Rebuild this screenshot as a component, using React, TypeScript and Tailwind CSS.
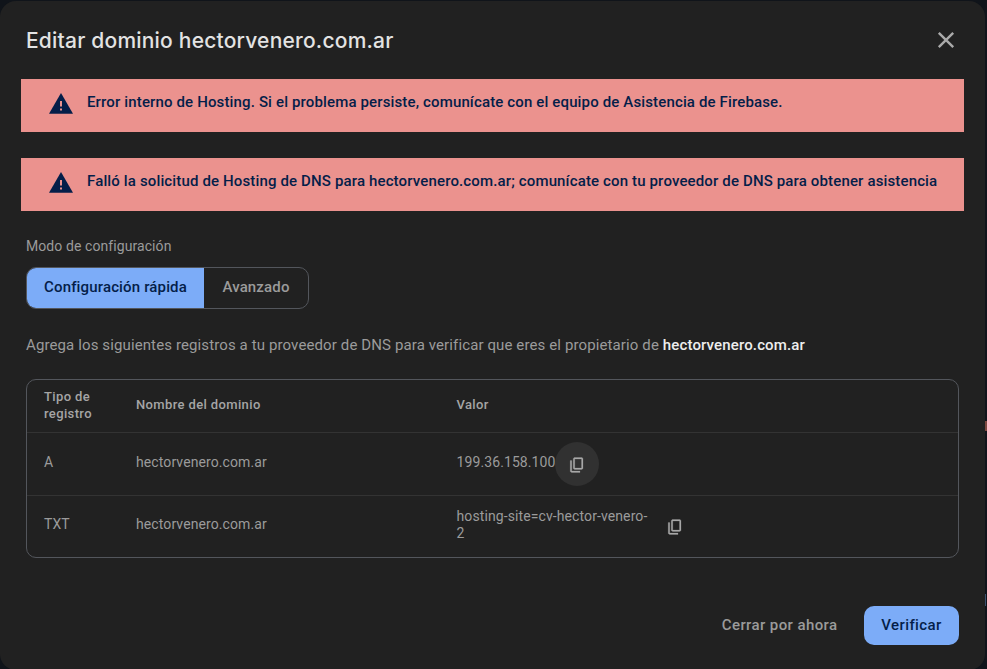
import React from "react";

function WarningIcon() {
  return (
    <svg className="h-6 w-6 shrink-0" viewBox="0 0 24 24" fill="#041e49">
      <path d="M0 21.7 12 1 24 21.7H0Z" />
      <path fill="#eb928e" d="M11 9h2v5.5h-2zM11 16.5h2v2h-2z" />
    </svg>
  );
}

function CopyIcon() {
  return (
    <svg className="h-[18px] w-[18px]" viewBox="0 0 24 24" fill="#a8a8a8">
      <path d="M9 18c-.55 0-1.02-.2-1.41-.59A1.93 1.93 0 0 1 7 16V4c0-.55.2-1.02.59-1.41C7.98 2.2 8.45 2 9 2h9c.55 0 1.02.2 1.41.59.4.39.59.86.59 1.41v12c0 .55-.2 1.02-.59 1.41-.39.4-.86.59-1.41.59H9Zm0-2h9V4H9v12Zm-4 6c-.55 0-1.02-.2-1.41-.59A1.93 1.93 0 0 1 3 20V6h2v14h11v2H5Z" stroke="#a8a8a8" strokeWidth="0.3" />
    </svg>
  );
}

function Alert({ children }: { children: React.ReactNode }) {
  return (
    <div role="alert" className="flex h-[53px] w-[943px] items-start bg-[#eb928e] pl-7 text-[#041e49]">
      <div className="pt-[13px]">
        <WarningIcon />
      </div>
      <p className="ml-3.5 pt-[13px] text-[15px] leading-5 font-medium tracking-[0.143px] whitespace-nowrap">{children}</p>
    </div>
  );
}

const columns = "grid grid-cols-[92px_320.5px_1fr] pl-[17px]";

export default function App() {
  return (
    <div className="h-[669px] w-[987px] overflow-hidden bg-[#10141a] font-['Roboto',sans-serif] text-[#9b9b9b]">
      <div className="flex pt-px">
        <main className="flex h-[669px] w-[985px] flex-col rounded-2xl bg-[#212121]">
          <header className="flex h-[78px] shrink-0 items-center justify-between pr-[27px] pl-[26px]">
            <h1 className="pt-[2px] font-['Inter',sans-serif] text-[21px] leading-7 font-medium tracking-[0.21px] text-[#e3e3e3]">
              Editar dominio hectorvenero.com.ar
            </h1>
            <button aria-label="Cerrar" className="flex">
              <svg className="h-6 w-6" viewBox="0 0 24 24" fill="none" stroke="#aaaaaa" strokeWidth="2.4">
                <path d="m4.8 4.8 14.4 14.4m0-14.4L4.8 19.2" />
              </svg>
            </button>
          </header>

          <section className="flex flex-col gap-[26px] pl-[21px]">
            <Alert>
              Error interno de Hosting. Si el problema persiste, comunícate con el equipo de Asistencia de Firebase.
            </Alert>
            <Alert>
              Falló la solicitud de Hosting de DNS para hectorvenero.com.ar; comunícate con tu proveedor de DNS para obtener asistencia
            </Alert>
          </section>

          <section className="flex grow flex-col pr-[26px] pl-[26px]">
            <p className="mt-[25px] text-sm leading-5 tracking-[0.08px]">Modo de configuración</p>
            <div className="mt-[11px] flex h-[42px] w-[283px] overflow-hidden rounded-[10px] border border-[#53565c] text-[15px] leading-5 font-medium tracking-[0.15px]">
              <button className="w-[177px] bg-[#7cacf8] pb-[2px] text-[#041e49]">Configuración rápida</button>
              <button className="grow pb-[2px]">Avanzado</button>
            </div>
            <p className="mt-[26px] text-[15px] leading-5 tracking-[0.115px] whitespace-nowrap">
              Agrega los siguientes registros a tu proveedor de DNS para verificar que eres el propietario de{" "}
              <strong className="font-medium tracking-[0.14px] text-[#eeeeee]">hectorvenero.com.ar</strong>
            </p>

            <div className="mt-6 h-[179px] w-[933px] rounded-[10px] border border-[#53565c] text-sm tracking-[0.1px]">
              <div className={`${columns} h-[53px] items-center border-b border-[#333333] pb-[3px] text-[13px] leading-[17px] font-medium tracking-[0.37px] text-[#a5a5a5]`}>
                <div>Tipo de<br />registro</div>
                <div>Nombre del dominio</div>
                <div>Valor</div>
              </div>
              <div className={`${columns} h-[63px] items-center border-b border-[#333333]`}>
                <div className="pb-[5px]">A</div>
                <div className="pb-[5px]">hectorvenero.com.ar</div>
                <div className="flex items-center">
                  <span className="w-[98.5px] pb-[5px] whitespace-nowrap">199.36.158.100</span>
                  <button aria-label="Copiar" className="flex h-11 w-11 items-center justify-center rounded-full bg-[#313131] pt-[2px]">
                    <CopyIcon />
                  </button>
                </div>
              </div>
              <div className={`${columns} h-[61px] items-center`}>
                <div className="pb-[5px]">TXT</div>
                <div className="pb-[5px]">hectorvenero.com.ar</div>
                <div className="flex items-center">
                  <span className="w-[196.5px] pb-[3px] leading-[17px] whitespace-nowrap">hosting-site=cv-hector-venero-<br />2</span>
                  <button aria-label="Copiar" className="flex h-11 w-11 items-center justify-center pt-px">
                    <CopyIcon />
                  </button>
                </div>
              </div>
            </div>

            <footer className="mt-12 flex h-[39px] items-center justify-end gap-[26.5px] text-[15px] leading-5 font-medium tracking-[0.4px]">
              <button className="pb-px">Cerrar por ahora</button>
              <button className="h-[39px] w-[95px] rounded-[10px] bg-[#7cacf8] pb-px text-[#041e49]">Verificar</button>
            </footer>
          </section>
        </main>
        <aside className="flex h-[669px] w-[2px] flex-col bg-[#11141b]">
          <div className="mt-[420px] h-[10px] w-[2px] bg-[#7d4841]" />
          <div className="mt-[163px] h-[12px] w-px bg-[#3c5170]" />
        </aside>
      </div>
    </div>
  );
}
